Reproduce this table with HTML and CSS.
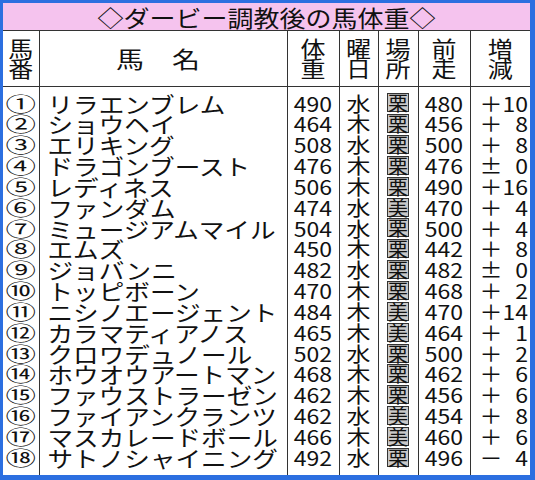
FILE: index.html
```html
<!DOCTYPE html>
<html lang="ja">
<head>
<meta charset="utf-8">
<link rel="stylesheet" href="styles.css">
</head>
<body>
<div class="frame">
  <div class="sheet">
    <div class="title"><div class="tt">◇ダービー調教後の馬体重◇</div></div>
    <table class="tbl">
      <colgroup>
        <col class="c-no"><col class="c-name"><col class="c-wt"><col class="c-day"><col class="c-pl"><col class="c-prev"><col class="c-diff">
      </colgroup>
      <thead>
        <tr>
          <th><div class="h2">馬<br>番</div></th>
          <th><div class="h1">馬　名</div></th>
          <th><div class="h2">体<br>重</div></th>
          <th><div class="h2">曜<br>日</div></th>
          <th><div class="h2">場<br>所</div></th>
          <th><div class="h2">前<br>走</div></th>
          <th><div class="h2">増<br>減</div></th>
        </tr>
      </thead>
      <tbody>
        <tr><td><div class="no">①</div></td><td><div class="nm">リラエンブレム</div></td><td><div class="num">490</div></td><td><div class="day">水</div></td><td><div class="pl"><span class="box">栗</span></div></td><td><div class="num">480</div></td><td><div class="df"><span>＋</span><span>10</span></div></td></tr>
        <tr><td><div class="no">②</div></td><td><div class="nm">ショウヘイ</div></td><td><div class="num">464</div></td><td><div class="day">木</div></td><td><div class="pl"><span class="box">栗</span></div></td><td><div class="num">456</div></td><td><div class="df"><span>＋</span><span>8</span></div></td></tr>
        <tr><td><div class="no">③</div></td><td><div class="nm">エリキング</div></td><td><div class="num">508</div></td><td><div class="day">水</div></td><td><div class="pl"><span class="box">栗</span></div></td><td><div class="num">500</div></td><td><div class="df"><span>＋</span><span>8</span></div></td></tr>
        <tr><td><div class="no">④</div></td><td><div class="nm">ドラゴンブースト</div></td><td><div class="num">476</div></td><td><div class="day">木</div></td><td><div class="pl"><span class="box">栗</span></div></td><td><div class="num">476</div></td><td><div class="df"><span>±</span><span>0</span></div></td></tr>
        <tr><td><div class="no">⑤</div></td><td><div class="nm">レディネス</div></td><td><div class="num">506</div></td><td><div class="day">木</div></td><td><div class="pl"><span class="box">栗</span></div></td><td><div class="num">490</div></td><td><div class="df"><span>＋</span><span>16</span></div></td></tr>
        <tr><td><div class="no">⑥</div></td><td><div class="nm">ファンダム</div></td><td><div class="num">474</div></td><td><div class="day">水</div></td><td><div class="pl"><span class="box">美</span></div></td><td><div class="num">470</div></td><td><div class="df"><span>＋</span><span>4</span></div></td></tr>
        <tr><td><div class="no">⑦</div></td><td><div class="nm">ミュージアムマイル</div></td><td><div class="num">504</div></td><td><div class="day">水</div></td><td><div class="pl"><span class="box">栗</span></div></td><td><div class="num">500</div></td><td><div class="df"><span>＋</span><span>4</span></div></td></tr>
        <tr><td><div class="no">⑧</div></td><td><div class="nm">エムズ</div></td><td><div class="num">450</div></td><td><div class="day">木</div></td><td><div class="pl"><span class="box">栗</span></div></td><td><div class="num">442</div></td><td><div class="df"><span>＋</span><span>8</span></div></td></tr>
        <tr><td><div class="no">⑨</div></td><td><div class="nm">ジョバンニ</div></td><td><div class="num">482</div></td><td><div class="day">水</div></td><td><div class="pl"><span class="box">栗</span></div></td><td><div class="num">482</div></td><td><div class="df"><span>±</span><span>0</span></div></td></tr>
        <tr><td><div class="no">⑩</div></td><td><div class="nm">トッピボーン</div></td><td><div class="num">470</div></td><td><div class="day">木</div></td><td><div class="pl"><span class="box">栗</span></div></td><td><div class="num">468</div></td><td><div class="df"><span>＋</span><span>2</span></div></td></tr>
        <tr><td><div class="no">⑪</div></td><td><div class="nm">ニシノエージェント</div></td><td><div class="num">484</div></td><td><div class="day">木</div></td><td><div class="pl"><span class="box">美</span></div></td><td><div class="num">470</div></td><td><div class="df"><span>＋</span><span>14</span></div></td></tr>
        <tr><td><div class="no">⑫</div></td><td><div class="nm">カラマティアノス</div></td><td><div class="num">465</div></td><td><div class="day">木</div></td><td><div class="pl"><span class="box">美</span></div></td><td><div class="num">464</div></td><td><div class="df"><span>＋</span><span>1</span></div></td></tr>
        <tr><td><div class="no">⑬</div></td><td><div class="nm">クロワデュノール</div></td><td><div class="num">502</div></td><td><div class="day">水</div></td><td><div class="pl"><span class="box">栗</span></div></td><td><div class="num">500</div></td><td><div class="df"><span>＋</span><span>2</span></div></td></tr>
        <tr><td><div class="no">⑭</div></td><td><div class="nm">ホウオウアートマン</div></td><td><div class="num">468</div></td><td><div class="day">木</div></td><td><div class="pl"><span class="box">栗</span></div></td><td><div class="num">462</div></td><td><div class="df"><span>＋</span><span>6</span></div></td></tr>
        <tr><td><div class="no">⑮</div></td><td><div class="nm">ファウストラーゼン</div></td><td><div class="num">462</div></td><td><div class="day">木</div></td><td><div class="pl"><span class="box">栗</span></div></td><td><div class="num">456</div></td><td><div class="df"><span>＋</span><span>6</span></div></td></tr>
        <tr><td><div class="no">⑯</div></td><td><div class="nm">ファイアンクランツ</div></td><td><div class="num">462</div></td><td><div class="day">水</div></td><td><div class="pl"><span class="box">美</span></div></td><td><div class="num">454</div></td><td><div class="df"><span>＋</span><span>8</span></div></td></tr>
        <tr><td><div class="no">⑰</div></td><td><div class="nm">マスカレードボール</div></td><td><div class="num">466</div></td><td><div class="day">木</div></td><td><div class="pl"><span class="box">美</span></div></td><td><div class="num">460</div></td><td><div class="df"><span>＋</span><span>6</span></div></td></tr>
        <tr><td><div class="no">⑱</div></td><td><div class="nm">サトノシャイニング</div></td><td><div class="num">492</div></td><td><div class="day">水</div></td><td><div class="pl"><span class="box">栗</span></div></td><td><div class="num">496</div></td><td><div class="df"><span>－</span><span>4</span></div></td></tr>
      </tbody>
    </table>
  </div>
</div>
</body>
</html>
```

FILE: styles.css
```css
* { box-sizing: border-box; }
html, body { margin: 0; padding: 0; }
body {
  width: 535px;
  height: 480px;
  font-family: "Noto Sans CJK JP", "Noto Sans", sans-serif;
  color: #111;
}
.frame {
  width: 535px;
  height: 480px;
  background: #2c6fe0;
  padding: 3px 5px 5px 3px;
}
.sheet {
  background: #fff;
  height: 100%;
  display: flex;
  flex-direction: column;
}
.title {
  height: 28px;
  background: #f5c3ee;
  border-bottom: 1px solid #333;
  display: flex;
  align-items: center;
  justify-content: center;
}
.tt {
  font-size: 26px;
  line-height: 28px;
  transform: scaleY(0.88);
  white-space: nowrap;
}
.tbl {
  width: 527px;
  table-layout: fixed;
  border-collapse: collapse;
  border-spacing: 0;
}
.c-no { width: 36px; }
.c-name { width: 248px; }
.c-wt { width: 52px; }
.c-day { width: 39px; }
.c-pl { width: 40px; }
.c-prev { width: 52px; }
.c-diff { width: 60px; }
th, td {
  padding: 0;
  border-left: 1px solid #333;
  font-weight: normal;
  vertical-align: middle;
}
th:first-child, td:first-child { border-left: none; }
thead th {
  height: 55px;
  border-bottom: 1px solid #333;
  text-align: center;
}
.h2 {
  font-size: 25px;
  line-height: 23px;
  transform: scaleY(0.85);
}
.h1 {
  font-size: 28px;
  line-height: 28px;
  transform: scaleY(0.8);
  padding-right: 10px;
}
tbody tr:first-child td { padding-top: 6px; }
tbody tr:last-child td { padding-bottom: 7px; }
tbody td > div {
  height: 20.85px;
  line-height: 20.85px;
  white-space: nowrap;
}
.no {
  text-align: center;
  font-size: 25px;
  transform: scale(1.22, 0.8);
}
.nm {
  font-size: 25.6px;
  padding-left: 8px;
  transform: scaleY(0.86);
}
.num {
  text-align: center;
  font-size: 23px;
  transform: scaleY(0.88);
}
.day {
  text-align: center;
  font-size: 24px;
  transform: scaleY(0.86);
}
.pl {
  display: flex;
  align-items: center;
  justify-content: center;
}
.box {
  display: block;
  width: 22px;
  height: 19px;
  line-height: 17px;
  font-size: 20px;
  text-align: center;
  border: 1.5px solid #333;
  background: #c8c8c8;
}
.df {
  display: flex;
  justify-content: space-between;
  padding: 0 2px 0 9px;
  font-size: 23px;
  transform: scaleY(0.88);
}
```
